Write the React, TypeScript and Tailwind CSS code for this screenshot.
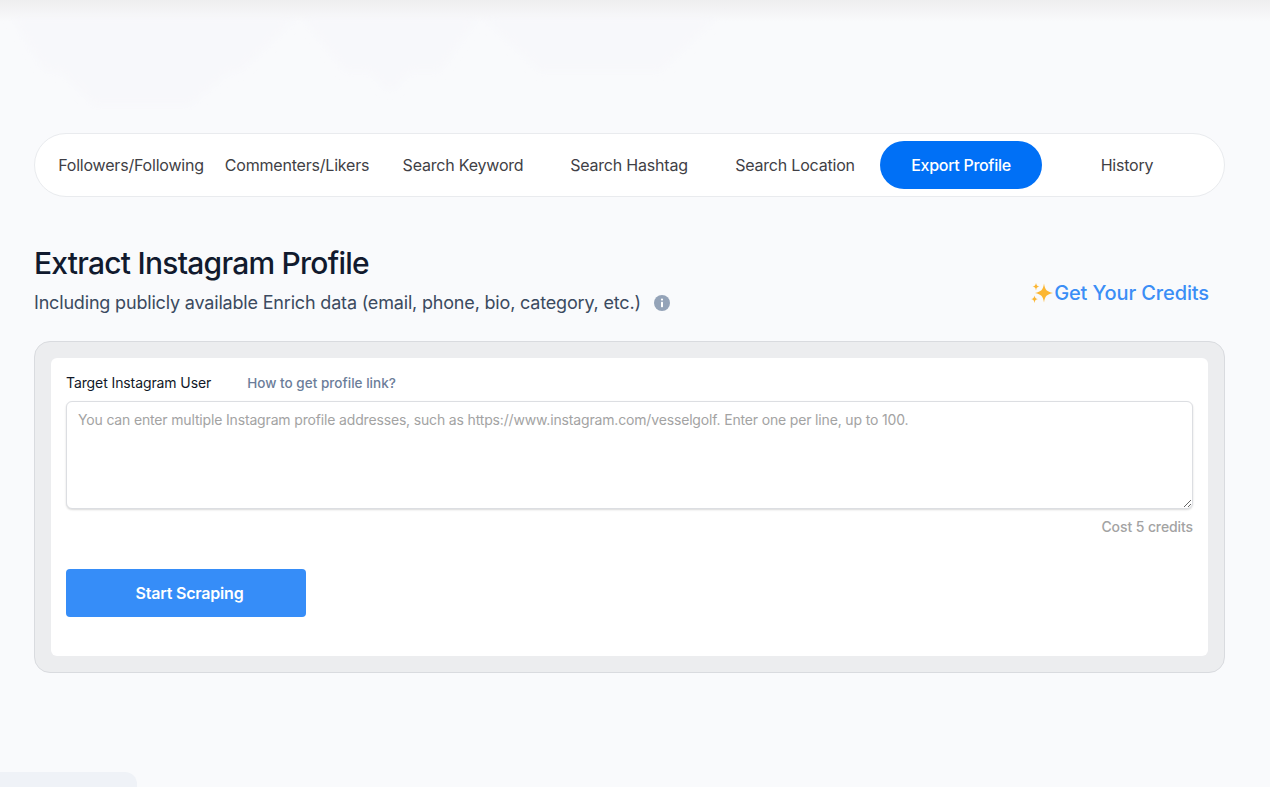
const tabs = [
  "Followers/Following",
  "Commenters/Likers",
  "Search Keyword",
  "Search Hashtag",
  "Search Location",
  "Export Profile",
  "History",
];

const Sparkles = () => (
  <svg width="24" height="24" viewBox="0 0 24 24" className="shrink-0" aria-hidden="true">
    <path d="M14 2.5C15 9 16.8 10.6 23 12C16.8 13.4 15 15 14 21.5C13 15 11.2 13.4 5 12C11.2 10.6 13 9 14 2.5Z" fill="#fbb633" />
    <path d="M6 2C6.5 4.5 7.2 5.2 9.4 5.6C7.2 6 6.5 6.7 6 9.4C5.5 6.7 4.8 6 2.6 5.6C4.8 5.2 5.5 4.5 6 2Z" fill="#fbb633" />
    <path d="M4.5 14.5C5 17 5.7 17.7 7.9 18.1C5.7 18.5 5 19.2 4.5 22C4 19.2 3.3 18.5 1.1 18.1C3.3 17.7 4 17 4.5 14.5Z" fill="#fbb633" />
  </svg>
);

const InfoDot = () => (
  <svg width="16" height="16" viewBox="0 0 16 16" className="ml-[13px] shrink-0" aria-hidden="true">
    <circle cx="8" cy="8" r="8" fill="#94a3b8" />
    <circle cx="8" cy="4.6" r="1.1" fill="#fff" />
    <rect x="7" y="6.8" width="2" height="5.4" rx="0.6" fill="#fff" />
  </svg>
);

export default function App() {
  return (
    <div className="relative h-[787px] overflow-hidden bg-[#f9fafc] pl-[34px] pr-[45px] pt-[133px] font-['Inter',sans-serif]">
      {/* faded header behind the page */}
      <div className="pointer-events-none absolute inset-x-0 top-0 h-[22px] bg-gradient-to-b from-[#eeeeef] to-transparent" aria-hidden="true" />
      <svg className="pointer-events-none absolute left-0 top-0" width="800" height="110" aria-hidden="true">
        <defs>
          <filter id="fade">
            <feGaussianBlur stdDeviation="4" />
          </filter>
        </defs>
        <g filter="url(#fade)" fill="#f6f6f9" fillOpacity="0.4">
          <path d="M10 15H300L240 72H45Z" />
          <path d="M60 72H230L190 106H95Z" />
          <path d="M300 15H480L440 72H345Z" />
          <path d="M370 72H410L395 90H385Z" />
          <path d="M480 15H720L660 72H540Z" />
        </g>
      </svg>

      <nav className="flex h-16 items-center gap-1 rounded-[32px] border border-[#e9ebee] bg-white pl-[15px]">
        {tabs.map((tab) => (
          <button
            key={tab}
            className={
              tab === "Export Profile"
                ? "h-12 w-[162px] shrink-0 rounded-3xl bg-[#0070f6] text-base font-medium tracking-[-0.3px] text-white"
                : "h-12 w-[162px] shrink-0 rounded-3xl text-base tracking-[-0.2px] text-[#3f3f46]"
            }
          >
            {tab}
          </button>
        ))}
      </nav>

      <div className="mt-[46px] flex items-start justify-between">
        <div>
          <h1 className="text-[30px] leading-[40px] font-medium tracking-tight text-[#111a2e]">Extract Instagram Profile</h1>
          <p className="mt-[6px] flex items-center text-lg leading-7 tracking-[-0.18px] text-[#3b4a60]">
            Including publicly available Enrich data (email, phone, bio, category, etc.)
            <InfoDot />
          </p>
        </div>
        <a className="mt-[36px] mr-4 flex items-center text-xl leading-7 font-medium tracking-[-0.12px] text-[#3b8ef6]">
          <Sparkles />
          <span>Get Your Credits</span>
        </a>
      </div>

      <div className="mt-[24px] h-[332px] rounded-2xl border border-[#d9dbdf] bg-[#ecedef] p-4">
        <div className="h-[298px] rounded-md bg-white px-[15px] pt-[15px]">
          <div className="flex h-5 items-center">
            <label className="text-sm tracking-[-0.1px] text-[#111827]">Target Instagram User</label>
            <a className="ml-[36px] text-[13.5px] font-medium tracking-[0.03px] text-[#6b7d99]">How to get profile link?</a>
          </div>
          <textarea
            className="mt-[8px] block h-[108px] w-full resize-y rounded-md border border-[#dcdee2] bg-white px-[11px] py-[8px] text-sm leading-5 tracking-[-0.16px] shadow-[0_1px_2px_rgba(0,0,0,0.15)] outline-none placeholder:text-[#a3a3a3]"
            placeholder="You can enter multiple Instagram profile addresses, such as https://www.instagram.com/vesselgolf. Enter one per line, up to 100."
          />
          <p className="mt-2 text-right text-sm leading-5 font-medium tracking-[-0.1px] text-[#a3a3a3]">Cost 5 credits</p>
          <button className="mt-8 h-12 w-60 rounded bg-[#368df8] pl-[7px] text-base font-semibold tracking-[-0.2px] text-white">Start Scraping</button>
        </div>
      </div>

      <div className="absolute bottom-0 left-0 h-[15px] w-[137px] rounded-tr-xl bg-[#eff2f7]" aria-hidden="true" />
    </div>
  );
}
